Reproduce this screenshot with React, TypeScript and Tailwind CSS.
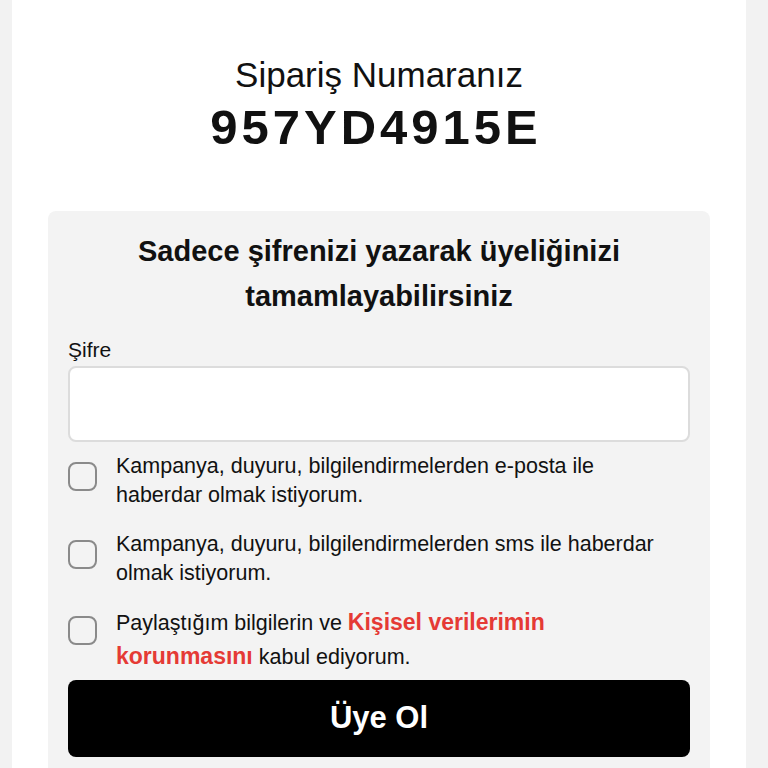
import { useState } from "react"

const font = { fontFamily: '"Liberation Sans", Arial, Helvetica, sans-serif' }

function Check({ children, leading = "leading-[29px]" }: { children: React.ReactNode; leading?: string }) {
  const [on, setOn] = useState(false)
  return (
    <label className="flex items-start gap-[19px] cursor-pointer">
      <span
        onClick={() => setOn(!on)}
        className={`mt-[10px] h-[29px] w-[29px] shrink-0 rounded-[8px] border-[2.5px] border-[#8a8a8a] ${on ? "bg-black" : "bg-transparent"}`}
      />
      <span className={`pr-[6px] text-[21.5px] text-[#111] ${leading}`}>{children}</span>
    </label>
  )
}

export default function App() {
  return (
    <div style={font} className="min-h-screen bg-[#f2f2f2] pl-[12px] pr-[22px]">
      <div className="min-h-screen bg-white pt-[53px] pb-10">
        <div className="text-center">
          <div className="text-[35px] leading-[44px] text-[#111]">Sipariş Numaranız</div>
          <div className="mt-[2px] pr-[6px] text-[49px] font-bold leading-[56px] tracking-[4px] text-[#111]">957YD4915E</div>
        </div>

        <div className="mx-[36px] mt-[56px] rounded-[8px] bg-[#f3f3f3] px-[20px] pt-[18px] pb-[40px]">
          <h2 className="text-center text-[29px] font-bold leading-[45px] text-[#111]">
            Sadece şifrenizi yazarak üyeliğinizi
            <br />
            tamamlayabilirsiniz
          </h2>

          <div className="mt-[19px] text-[21px] leading-[24px] text-[#111]">Şifre</div>
          <input
            type="password"
            className="mt-[4px] block h-[76px] w-full rounded-[8px] border-2 border-[#dcdcdc] bg-white px-4 text-[20px] outline-none"
          />

          <div className="mt-[10px] flex flex-col gap-[20px]">
            <Check>Kampanya, duyuru, bilgilendirmelerden e-posta ile haberdar olmak istiyorum.</Check>
            <Check>Kampanya, duyuru, bilgilendirmelerden sms ile haberdar olmak istiyorum.</Check>
            <div className="-mt-[2px]">
              <Check leading="leading-[33px]">
                Paylaştığım bilgilerin ve{" "}
                <a href="#" className="text-[23px] font-bold text-[#e53a35]">
                  Kişisel verilerimin korunmasını
                </a>{" "}
                kabul ediyorum.
              </Check>
            </div>
          </div>

          <button className="mt-[6px] flex h-[77px] w-full items-center justify-center rounded-[8px] bg-black text-[31px] font-bold text-white">
            Üye Ol
          </button>
        </div>
      </div>
    </div>
  )
}
